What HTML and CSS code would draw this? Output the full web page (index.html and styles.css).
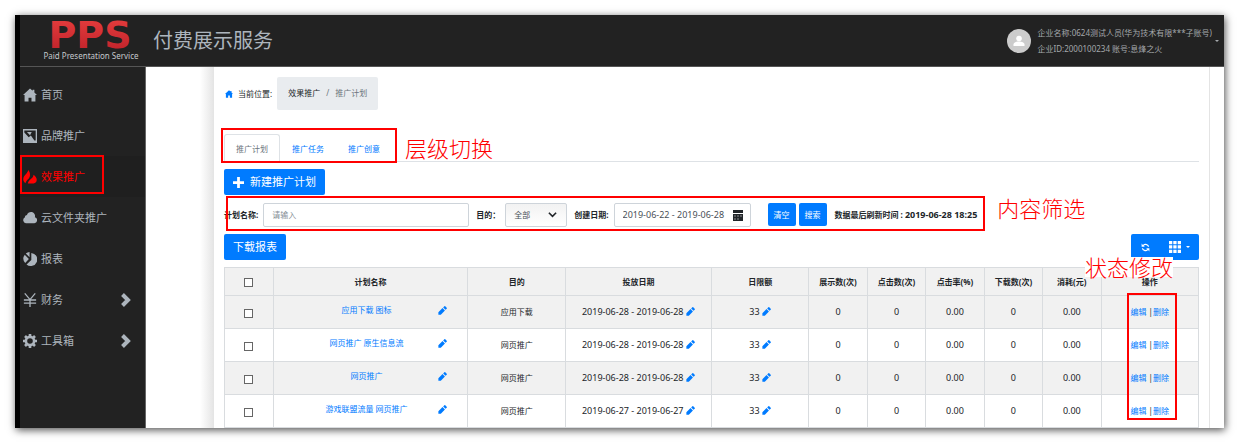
FILE: index.html
```html
<!DOCTYPE html>
<html lang="zh-CN">
<head>
  <meta charset="UTF-8">
  <meta name="viewport" content="width=device-width, initial-scale=1.0">
  <title>付费展示服务</title>
  <link rel="stylesheet" href="styles.css">
</head>
<body>
  <svg class="sprite" aria-hidden="true">
    <symbol id="home" viewBox="0 0 16 16"><path d="M8 .5 0 8h1.800v7.500h4.500V11h3.400v4.500h4.500V8H16l-3-2.900V2h-2v1.200z"/></symbol>
    <symbol id="brand" viewBox="0 0 16 16"><path fill-rule="evenodd" d="M0 0h16v16H0zM1.500 1.800V4l5 5.500L9 7.500l4 5.500h1.500V1.800z"/><path d="M4.500 3.500h5.500L8 7z"/></symbol>
    <symbol id="fire" viewBox="0 0 16 16"><path d="M6 0C5.500 4 .3 6 .3 10.500c0 2 1 3.500 2.700 4.500 0-3.500 5.500-5 5-10C7.900 3 7.200 1.200 6 0zM12 5.500c0 4.500-5.500 5-6.500 10H12c2.300-.5 3.700-2 3.700-4.300 0-2.500-1.700-4.200-3.700-5.700z"/></symbol>
    <symbol id="cloud" viewBox="0 0 16 16"><path d="M3.300 14A3.500 3.500 0 0 1 2 7.500 3 3 0 0 1 4.500 4.500 4.700 4.700 0 0 1 13.600 7 3.600 3.600 0 0 1 13 14z"/></symbol>
    <symbol id="report" viewBox="0 0 16 16"><path d="M9.500 1A7.500 7.500 0 1 1 4 14.200L9.500 9zM7.500 0v6L3.200 1.800A8 8 0 0 1 7.500 0zM2 3l4.700 5-4.200 4.500A7.500 7.500 0 0 1 2 3z"/></symbol>
    <symbol id="yen" viewBox="0 0 16 16"><path fill="none" stroke="currentColor" stroke-width="1.500" d="m2 .5 6 7 6-7M8 7.500V16M1 8h14M1 11.500h14"/></symbol>
    <symbol id="gear" viewBox="0 0 16 16"><circle cx="8" cy="8" r="4.700" fill="none" stroke="currentColor" stroke-width="3"/><path fill="none" stroke="currentColor" stroke-width="3" d="M8 0v3M8 13v3M0 8h3M13 8h3M2.300 2.300l2 2M11.700 11.700l2 2M2.300 13.700l2-2M11.700 4.300l2-2"/></symbol>
    <symbol id="right" viewBox="0 0 10 14"><path fill="none" stroke="currentColor" stroke-width="4" d="m1.500 1.500 5.500 5.500-5.500 5.500"/></symbol>
    <symbol id="pencil" viewBox="0 0 24 24"><path d="M1 16.500V23h6.500L18.500 12 12 5.500zM23.200 7a1.800 1.800 0 0 0 0-2.400L19.400.8a1.800 1.800 0 0 0-2.400 0L13.800 4 20 10.200z"/></symbol>
  </svg>

  <div class="window">
    <header class="header">
      <a class="logo" href="#">
        <svg class="logo-mark" viewBox="0 0 99 31" role="img" aria-label="PPS">
          <defs>
            <linearGradient id="red" x1="0" y1="0" x2="0" y2="1"><stop offset="0" stop-color="#ea4040"/><stop offset="1" stop-color="#bb1f28"/></linearGradient>
          </defs>
          <text class="logo-text" x="49" y="29" text-anchor="middle" fill="url(#red)">PPS</text>
        </svg>
        <span class="logo-sub">Paid Presentation Service</span>
      </a>
      <h1 class="title">付费展示服务</h1>
      <div class="user">
        <svg class="avatar" viewBox="0 0 24 24"><circle cx="12" cy="12" r="12" fill="#ccc"/><circle cx="12" cy="9.500" r="2.800" fill="#fff"/><path fill="#fff" d="M6.500 17v-1.500c0-4 11-4 11 0V17z"/></svg>
        <div class="user-info">
          <div>企业名称:0624测试人员(华为技术有限***子账号)</div>
          <div>企业ID:2000100234 账号:息烽之火</div>
        </div>
        <span class="caret"></span>
      </div>
    </header>

    <div class="main">
      <nav class="sidebar">
        <a class="menu-item" href="#"><svg class="menu-icon"><use href="#home"/></svg>首页</a>
        <a class="menu-item" href="#"><svg class="menu-icon"><use href="#brand"/></svg>品牌推广</a>
        <a class="menu-item active" href="#"><svg class="menu-icon"><use href="#fire"/></svg>效果推广<span class="mark mark-menu"></span></a>
        <a class="menu-item" href="#"><svg class="menu-icon"><use href="#cloud"/></svg>云文件夹推广</a>
        <a class="menu-item" href="#"><svg class="menu-icon"><use href="#report"/></svg>报表</a>
        <a class="menu-item" href="#"><svg class="menu-icon"><use href="#yen"/></svg>财务<svg class="arrow"><use href="#right"/></svg></a>
        <a class="menu-item" href="#"><svg class="menu-icon"><use href="#gear"/></svg>工具箱<svg class="arrow"><use href="#right"/></svg></a>
      </nav>
      <div class="gutter"></div>

      <main class="content">
        <div class="location">
          <svg class="home-icon"><use href="#home"/></svg>
          <span>当前位置:</span>
          <div class="breadcrumb"><a href="#">效果推广</a><span>/</span><span>推广计划</span></div>
        </div>

        <div class="tabs">
          <a class="tab current" href="#">推广计划</a>
          <a class="tab" href="#">推广任务</a>
          <a class="tab" href="#">推广创意</a>
          <span class="mark mark-tabs"></span>
          <span class="note note-tabs">层级切换</span>
        </div>

        <button class="btn" type="button">
          <svg class="plus" viewBox="0 0 12 12"><path stroke="currentColor" stroke-width="3" d="M6 0v12M0 6h12"/></svg>
          新建推广计划
        </button>

        <form class="filter">
          <label class="label" for="planName">计划名称:</label>
          <input class="field plan-name" id="planName" type="text" placeholder="请输入">
          <label class="label" for="purpose">目的：</label>
          <span class="with-icon">
            <select class="field purpose" id="purpose"><option>全部</option></select>
            <svg class="down" viewBox="0 0 10 8"><path fill="none" stroke="currentColor" stroke-width="1.800" d="m1 1.500 4 4 4-4"/></svg>
          </span>
          <label class="label" for="created">创建日期:</label>
          <span class="with-icon">
            <input class="field created" id="created" type="text" value="2019-06-22 - 2019-06-28">
            <svg class="calendar" viewBox="0 0 10 11"><path fill-rule="evenodd" d="M0 0h10v3H0zM0 4h10v7H0zM1.500 5.500v1h1v-1zM4.500 5.500v1h1v-1zM7.500 5.500v1h1v-1zM1.500 8.500v1h1v-1zM4.500 8.500v1h1v-1z"/></svg>
          </span>
          <button class="btn btn-small first" type="reset">清空</button>
          <button class="btn btn-small" type="button">搜索</button>
          <strong class="refresh">数据最后刷新时间 : <span class="num">2019-06-28 18:25</span></strong>
          <span class="mark mark-filter"></span>
          <span class="note note-filter">内容筛选</span>
        </form>

        <div class="toolbar">
          <button class="btn" type="button">下载报表</button>
          <div class="btn-group">
            <button class="btn btn-icon" type="button" aria-label="刷新">
              <svg class="sync" viewBox="0 0 24 24"><path transform="rotate(-45 12 12)" d="M12 4V0L7 5l5 5V6.500c3 0 5.500 2.500 5.500 5.500 0 1-.25 1.970-.7 2.800l1.900 1.900A8 8 0 0 0 12 4zM12 17.500c-3 0-5.500-2.500-5.500-5.500 0-1 .25-1.970.7-2.800L5.300 7.300A8 8 0 0 0 12 20v4l5-5-5-5z"/></svg>
            </button>
            <button class="btn btn-icon" type="button" aria-label="列">
              <svg class="grid" viewBox="0 0 12 12"><path d="M0 0h3.300v3.300H0zM4.300 0h3.300v3.300H4.300zM8.700 0H12v3.300H8.700zM0 4.300h3.300v3.300H0zM4.300 4.300h3.300v3.300H4.300zM8.700 4.300H12v3.300H8.700zM0 8.700h3.300V12H0zM4.300 8.700h3.300V12H4.300zM8.700 8.700H12V12H8.700z"/></svg>
              <span class="caret"></span>
            </button>
          </div>
        </div>

        <div class="table-wrap">
          <table class="table">
            <colgroup>
              <col class="w5"><col class="w20"><col class="w10"><col class="w15"><col class="w10">
              <col class="w6"><col class="w6"><col class="w6"><col class="w6"><col class="w6"><col class="w10">
            </colgroup>
            <thead>
              <tr>
                <th><input class="check" type="checkbox" aria-label="全选"></th>
                <th>计划名称</th><th>目的</th><th>投放日期</th><th>日限额</th>
                <th>展示数(次)</th><th>点击数(次)</th><th>点击率(%)</th><th>下载数(次)</th><th>消耗(元)</th><th>操作</th>
              </tr>
            </thead>
            <tbody id="rows"></tbody>
          </table>
          <span class="mark mark-actions"></span>
          <span class="note note-actions">状态修改</span>
        </div>
      </main>
    </div>
  </div>

  <script>
    const plans = [
      { name: "应用下载 图标", purpose: "应用下载", date: "2019-06-28 - 2019-06-28" },
      { name: "网页推广 原生信息流", purpose: "网页推广", date: "2019-06-28 - 2019-06-28" },
      { name: "网页推广", purpose: "网页推广", date: "2019-06-28 - 2019-06-28" },
      { name: "游戏联盟流量 网页推广", purpose: "网页推广", date: "2019-06-27 - 2019-06-27" }
    ];

    const pencil = `<svg class="pencil"><use href="#pencil"/></svg>`;

    document.getElementById("rows").innerHTML = plans.map(plan => `
      <tr>
        <td><input class="check" type="checkbox" aria-label="${plan.name}"></td>
        <td><div class="name"><a href="#">${plan.name}</a>${pencil}</div></td>
        <td>${plan.purpose}</td>
        <td class="num">${plan.date} ${pencil}</td>
        <td class="num">33 ${pencil}</td>
        <td class="num">0</td>
        <td class="num">0</td>
        <td class="num">0.00</td>
        <td class="num">0</td>
        <td class="num">0.00</td>
        <td><a href="#">编辑</a> |<a href="#">删除</a></td>
      </tr>`).join("");
  </script>
</body>
</html>
```
FILE: styles.css
```css
* {
  box-sizing: border-box;
}

body {
  margin: 0;
  padding: 15px 15px 16px;
  background: #fff;
  color: #212529;
  font-family: "Noto Sans", "Noto Sans CJK SC", sans-serif;
  font-size: 8px;
  line-height: 12px;
}

a {
  color: #007bff;
  text-decoration: none;
}

svg {
  flex: none;
  fill: currentColor;
}

button, input, select {
  font: inherit;
}

.sprite {
  position: absolute;
  width: 0;
  height: 0;
}

.window {
  border-left: 5px solid #000;
  background: #fff;
  box-shadow: 1px 2px 8px rgba(0, 0, 0, 0.7);
}

/* header */
.header {
  display: flex;
  align-items: center;
  height: 52px;
  padding: 0 5px 0 21px;
  background: #222;
  border-bottom: 1px solid #555;
  color: #adb5bd;
}

.logo {
  display: flex;
  flex-direction: column;
  width: 100px;
  color: #c4c8cc;
  white-space: nowrap;
}

.logo-mark {
  width: 99px;
  height: 31px;
  overflow: visible;
}

.logo-text {
  font-family: "DejaVu Sans", sans-serif;
  font-size: 38px;
  font-weight: bold;
}

.logo-sub {
  text-align: center;
}

.title {
  margin: 0 0 0 12px;
  font-size: 20px;
  font-weight: 400;
  line-height: 28px;
}

.user {
  display: flex;
  align-items: center;
  gap: 3px;
  margin-left: auto;
  color: #a4a8ab;
  line-height: 16px;
}

.avatar {
  width: 24px;
  height: 24px;
  margin-right: 4px;
}

.caret {
  border: 2px solid transparent;
  border-top-color: currentColor;
  border-bottom: 0;
}

/* sidebar */
.main {
  display: flex;
}

.sidebar {
  flex: none;
  width: 126px;
  padding-top: 7px;
  background: #222;
  border-right: 1px solid #666;
}

.menu-item {
  position: relative;
  display: flex;
  align-items: center;
  gap: 4px;
  height: 41px;
  padding: 0 14px 0 3px;
  color: #adb5bd;
  font-size: 11px;
}

.menu-item.active {
  background: #1f1f1f;
  color: #f00;
}

.menu-icon {
  width: 14px;
  height: 14px;
}

.arrow {
  width: 10px;
  height: 14px;
  margin-left: auto;
}

.gutter {
  flex: none;
  width: 68px;
  background: linear-gradient(to right, #fff 54px, #e4e4e4);
}

/* content */
.content {
  flex: 1;
  min-width: 0;
  margin-right: 14px;
  padding: 10px 10px 0;
  border-right: 1px solid #e4e4e4;
}

.location {
  display: flex;
  align-items: center;
  gap: 5px;
}

.home-icon {
  width: 8px;
  height: 8px;
  margin-left: 1px;
  color: #007bff;
}

.breadcrumb {
  display: flex;
  gap: 6px;
  padding: 10px 11px 11px;
  border-radius: 2px;
  background: #e9ecef;
  color: #6c757d;
}

.breadcrumb a {
  color: #212529;
}

.tabs {
  position: relative;
  display: flex;
  height: 28px;
  margin: 24px 0 7px;
  border-bottom: 1px solid #dee2e6;
}

.tab {
  height: 28px;
  padding: 8px 11px;
  border: 1px solid transparent;
}

.tab.current {
  border-color: #dee2e6 #dee2e6 #fff;
  border-radius: 3px 3px 0 0;
  color: #6c757d;
}

.btn {
  display: inline-flex;
  align-items: center;
  justify-content: center;
  gap: 6px;
  height: 26px;
  padding: 0 9px;
  border: 0;
  border-radius: 2px;
  background: #007bff;
  color: #fff;
  font-size: 11px;
  white-space: nowrap;
}

.plus {
  width: 11px;
  height: 11px;
}

.filter {
  position: relative;
  display: flex;
  align-items: center;
  width: max-content;
  height: 25px;
  margin: 7px 0;
}

.label {
  margin-right: 5px;
  font-weight: bold;
}

.field {
  height: 24px;
  margin-right: 7px;
  padding: 0 8px;
  border: 1px solid #ced4da;
  border-radius: 2px;
  background: #fff;
  color: #495057;
}

.field::placeholder {
  color: #868e96;
}

.plan-name {
  width: 206px;
}

.with-icon {
  position: relative;
  display: flex;
}

.purpose {
  width: 62px;
  appearance: none;
  background: linear-gradient(#f2f2f2, #fff);
}

.down {
  position: absolute;
  top: 8px;
  right: 17px;
  width: 9px;
  height: 8px;
  pointer-events: none;
}

.created {
  width: 137px;
  font-size: 9px;
}

.calendar {
  position: absolute;
  top: 7px;
  right: 15px;
  width: 10px;
  height: 11px;
}

.btn-small {
  height: 23px;
  margin-right: 3px;
  padding: 0 6px;
  font-size: 8px;
}

.btn-small.first {
  margin-left: 10px;
}

.refresh {
  margin-left: 5px;
  white-space: nowrap;
}

.num {
  font-size: 9px;
}

.toolbar {
  display: flex;
  justify-content: space-between;
  margin-bottom: 7px;
}

.btn-group {
  display: flex;
}

.btn-icon {
  gap: 5px;
}

.btn-group .btn-icon:first-child {
  border-radius: 2px 0 0 2px;
}

.btn-group .btn-icon:last-child {
  border-radius: 0 2px 2px 0;
}

.sync {
  width: 11px;
  height: 11px;
}

.grid {
  width: 12px;
  height: 12px;
}

/* table */
.table-wrap {
  position: relative;
}

.table {
  width: 100%;
  table-layout: fixed;
  border-collapse: collapse;
}

.table th, .table td {
  height: 33px;
  padding: 0;
  border: 1px solid #d9dcdf;
  text-align: center;
  white-space: nowrap;
}

.table th {
  height: 28px;
}

.table thead tr, .table tbody tr:nth-child(odd) {
  background: #f1f1f1;
}

.w5 { width: 5%; }
.w6 { width: 6%; }
.w10 { width: 10%; }
.w15 { width: 15%; }
.w20 { width: 20%; }

.check {
  display: block;
  width: 9px;
  height: 9px;
  margin: 2px auto 0;
  appearance: none;
  border: 1px solid #666;
  background: #fff;
}

.name {
  display: grid;
  grid-template-columns: 1fr 10px;
  align-items: center;
  gap: 20px;
  padding: 0 19px 4px 41px;
}

.pencil {
  width: 9px;
  height: 9px;
  color: #007bff;
  vertical-align: -1px;
}

/* red call-outs over the page */
.mark {
  position: absolute;
  border: 2px solid #f00;
  pointer-events: none;
}

.note {
  position: absolute;
  color: #f00;
  font-size: 22px;
  font-weight: 300;
  line-height: 20px;
  white-space: nowrap;
}

.mark-menu {
  top: -1px;
  left: 0;
  width: 84px;
  height: 39px;
}

.mark-tabs {
  top: -6px;
  left: -3px;
  width: 176px;
  height: 35px;
}

.note-tabs {
  top: 4px;
  left: 181px;
}

.mark-filter {
  top: -6px;
  right: -8px;
  bottom: -4px;
  left: 2px;
}

.note-filter {
  top: -4px;
  left: calc(100% + 20px);
}

.mark-actions {
  top: 26px;
  right: 22px;
  bottom: 8px;
  width: 50px;
}

.note-actions {
  top: -10px;
  right: 26px;
  background: #fff;
}
```
